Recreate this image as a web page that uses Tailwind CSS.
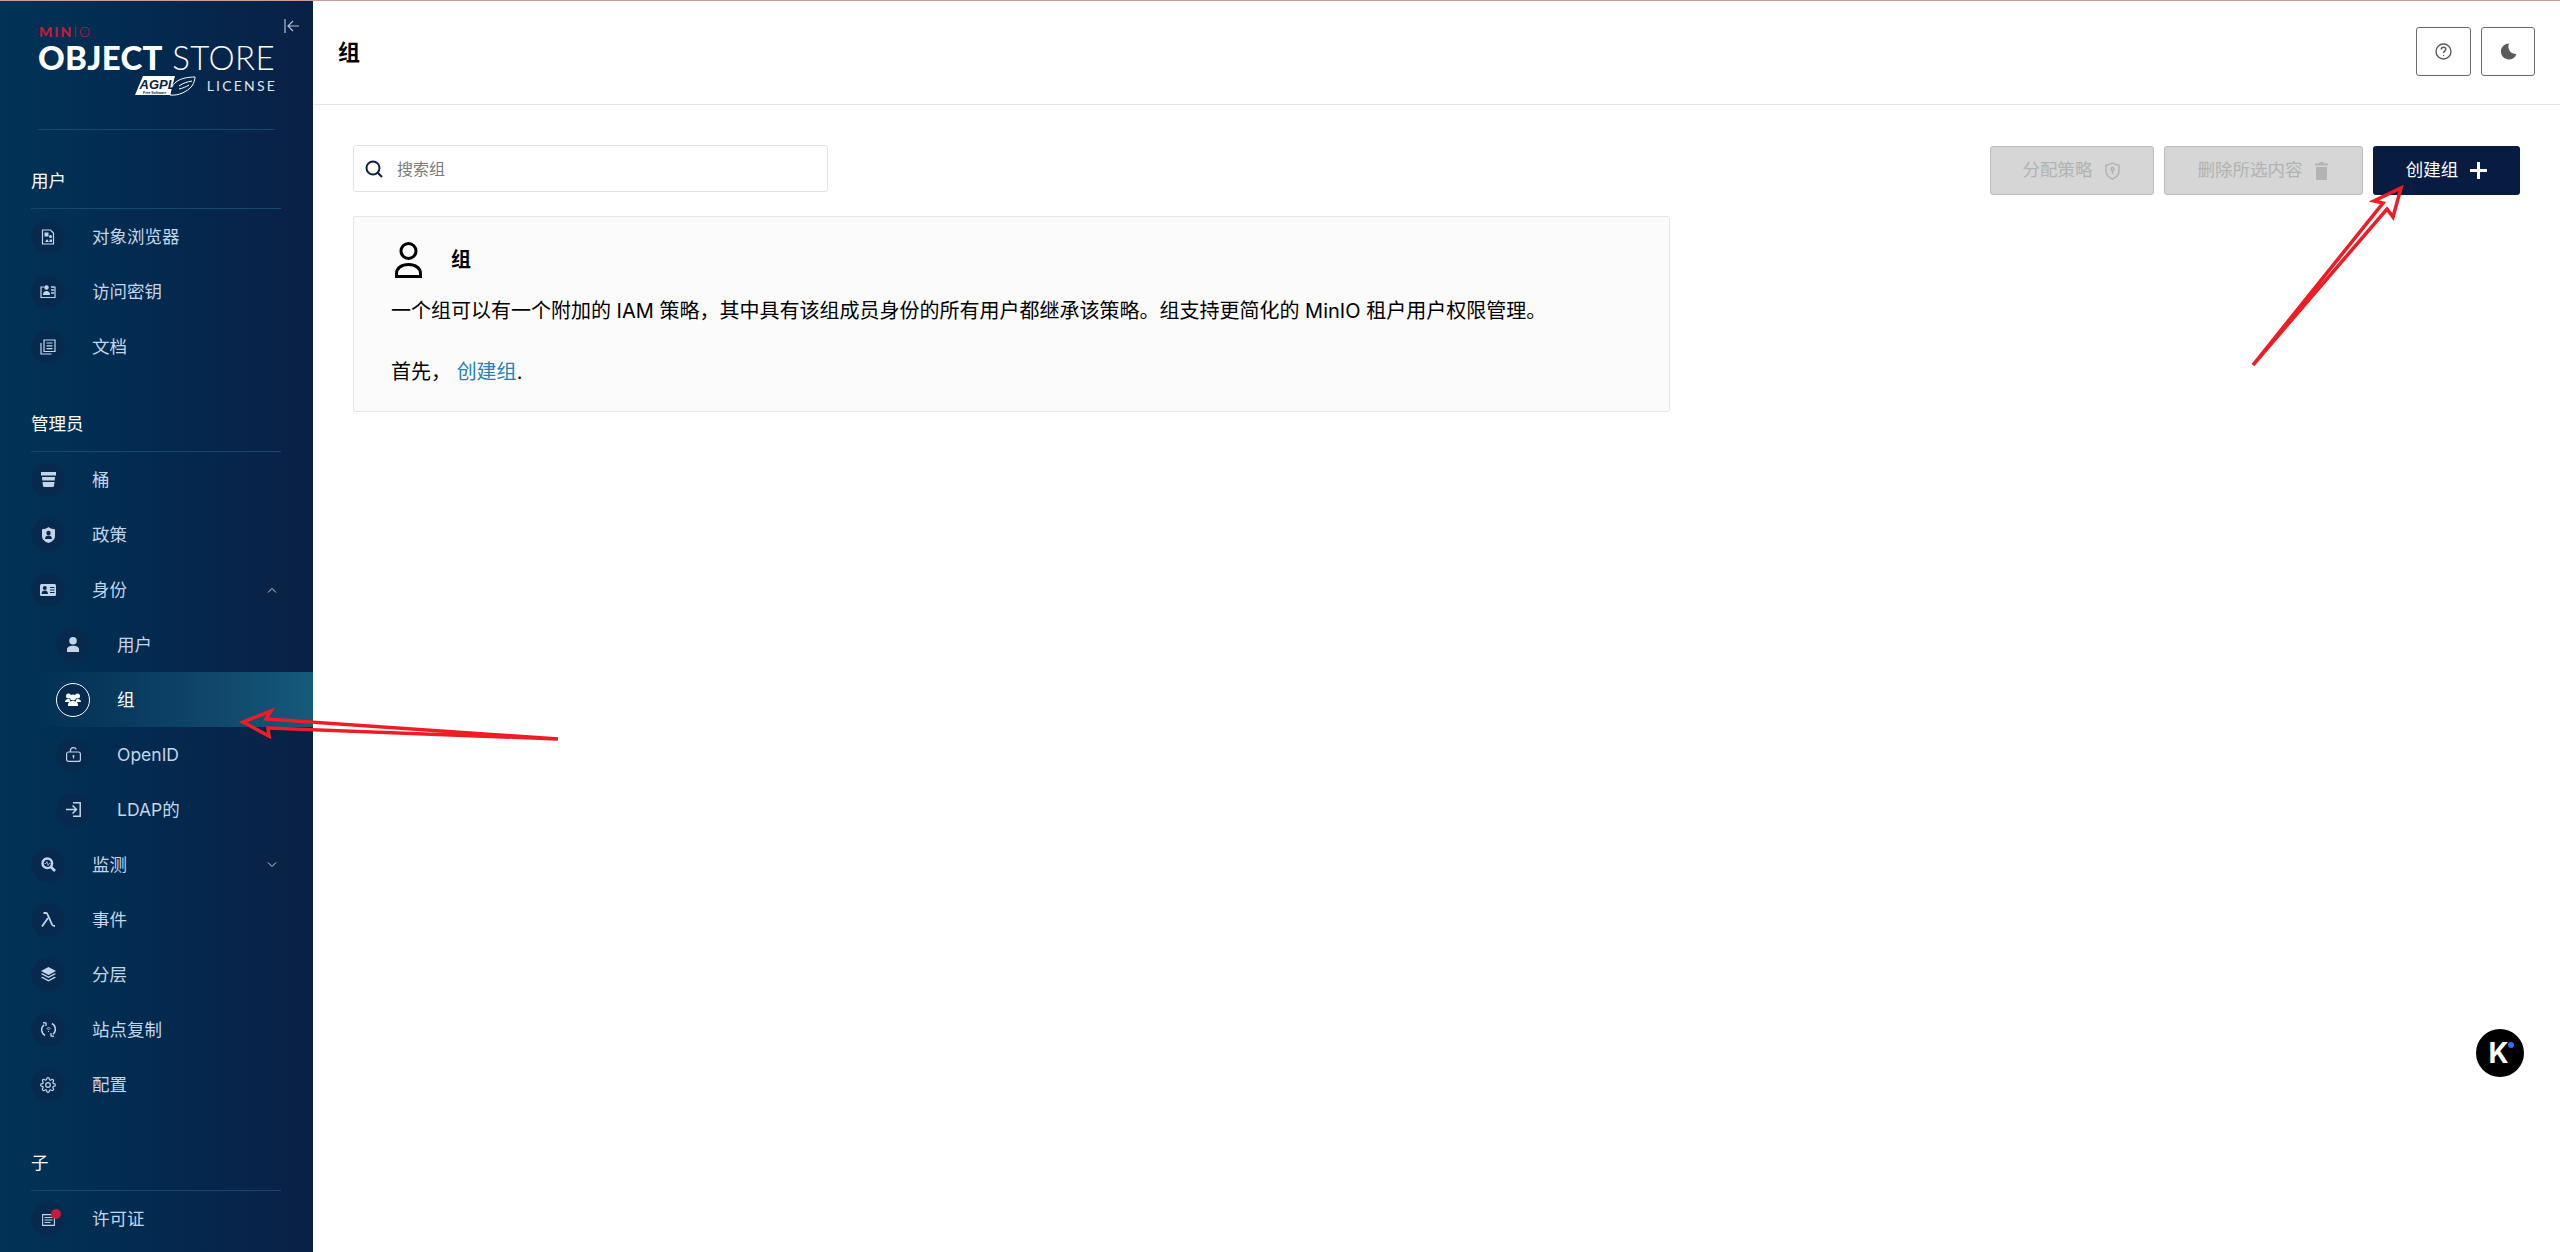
<!DOCTYPE html>
<html lang="zh-CN">
  <head>
    <meta charset="UTF-8" />
    <title>MinIO Object Store</title>
    <script src="https://cdn.jsdelivr.net/npm/@tailwindcss/browser@4"></script>
  </head>
  <body class="relative h-[1252px] w-[2560px] overflow-hidden bg-white font-['Inter','Noto_Sans_CJK_SC',sans-serif] text-black">
    <div class="h-px bg-[#c79e9a]"></div>
    <div class="flex h-[1251px]">
      <!-- Sidebar -->
      <aside class="relative flex w-[313px] shrink-0 flex-col bg-gradient-to-r from-[#013356] via-[#03294f] to-[#0a2045] text-[17.5px] text-[#c5d5e8]">
        <button class="absolute left-[284px] top-[18px] text-[#b4c0d0]">
          <svg class="h-[14px] w-[15px]" viewBox="0 0 15 14" fill="none" stroke="currentColor" stroke-width="1.2">
            <path d="M1 0v14" />
            <path d="M15 7H4M9 2 4 7l5 5" />
          </svg>
        </button>
        <!-- Logo -->
        <div class="mx-[38px] h-[129px] w-[237px] shrink-0 border-b border-[#14486c] pt-[24px] font-['Lato',sans-serif] leading-none">
          <div class="ml-px h-[13px] text-[14px] leading-[13px] tracking-[2px] text-[#c8193e]"><span class="font-black">MIN</span><span class="font-light">IO</span></div>
          <div class="mt-[6px] flex h-[26px] items-center justify-between whitespace-nowrap text-[33px] text-white">
            <span class="font-black tracking-[0.3px]">OBJECT</span><span class="font-light tracking-[0.4px]">STORE</span>
          </div>
          <div class="mt-[5px] flex items-center justify-end gap-[11px]">
            <svg class="h-[21px] w-[61px]" viewBox="0 0 61 21">
              <path d="M8 1h32l-5 19H0z" fill="#fff" />
              <path d="M35 20c8 1 17-3 22-9 2-3 3-7 3-9-6 0-14 1-19 5-4 3-6 8-6 13z" fill="none" stroke="#fff" stroke-width="1" />
              <path d="M44 11c4-3 8-4 13-5M44 14c4-1 7-2 10-4" fill="none" stroke="#fff" stroke-width="1" />
              <text x="4.5" y="14" font-family="Liberation Sans" font-size="13" font-style="italic" font-weight="700" fill="#0a2146">AGPL</text>
              <text x="8" y="19" font-family="Liberation Sans" font-size="3.5" font-weight="700" fill="#0a2146">Free Software</text>
            </svg>
            <span class="text-[14px] leading-[14px] tracking-[2.2px] text-[#dfe6ee] -mr-[2px]">LICENSE</span>
          </div>
        </div>

        <!-- 用户 -->
        <div class="ml-[31px] flex h-[79px] w-[250px] shrink-0 items-end border-b border-[#14486c] pb-[15px] leading-6 text-white">用户</div>
        <div class="flex h-[55px] shrink-0 items-center pl-[31px]">
          <span class="flex h-[34px] w-[34px] items-center justify-center rounded-full border border-[#0b2a50] bg-[#07294e]">
            <svg class="h-[16px] w-[16px]" viewBox="0 0 16 16" fill="none" stroke="currentColor"><path d="M2.5 1h8l3 3v11h-11z" stroke-width="1.2" /><rect x="4.5" y="3.5" width="4" height="4" fill="currentColor" stroke="none" /><circle cx="10.5" cy="7.5" r="1.5" fill="currentColor" stroke="none" /><path d="m5 13 2-3 2 3zM9.5 10.5h2.5v2.500h-2.500z" fill="currentColor" stroke="none" /></svg>
          </span>
          <span class="ml-[27px] pt-[2px]">对象浏览器</span>
        </div>
        <div class="flex h-[55px] shrink-0 items-center pl-[31px]">
          <span class="flex h-[34px] w-[34px] items-center justify-center rounded-full border border-[#0b2a50] bg-[#07294e]">
            <svg class="h-[15px] w-[16px]" viewBox="0 0 16 15" fill="none" stroke="currentColor"><path d="M4 3H1v10.500h14V3h-1" stroke-width="1.2" /><circle cx="6.500" cy="3.500" r="2.200" fill="currentColor" stroke="none" /><path d="M3 11c0-3 1.500-4 3.500-4s3.500 1 3.500 4z" fill="currentColor" stroke="none" /><path d="M11 3h3M11 6h3M11 9h3" stroke-width="1.400" /></svg>
          </span>
          <span class="ml-[27px] pt-[2px]">访问密钥</span>
        </div>
        <div class="flex h-[55px] shrink-0 items-center pl-[31px]">
          <span class="flex h-[34px] w-[34px] items-center justify-center rounded-full border border-[#0b2a50] bg-[#07294e]">
            <svg class="h-[16px] w-[16px]" viewBox="0 0 16 16" fill="none" stroke="currentColor" stroke-width="1.200"><path d="M4 1h11v11.500H4z" /><path d="M1 4v11h10.500" /><path d="M6.500 4h6M6.500 6.800h6M6.500 9.600h6" /></svg>
          </span>
          <span class="ml-[27px] pt-[2px]">文档</span>
        </div>

        <!-- 管理员 -->
        <div class="ml-[31px] flex h-[78px] w-[250px] shrink-0 items-end border-b border-[#14486c] pb-[15px] leading-6 text-white">管理员</div>
        <div class="flex h-[55px] shrink-0 items-center pl-[31px]">
          <span class="flex h-[34px] w-[34px] items-center justify-center rounded-full border border-[#0b2a50] bg-[#07294e]">
            <svg class="h-[15px] w-[15px]" viewBox="0 0 15 15" fill="currentColor"><path d="M0 0h15v3.500H0zM1 5h13l-.300 3.500H1.300zM1.500 10h12l-.500 3.800c0 .700-.500 1.200-1.200 1.200H3.200c-.700 0-1.200-.500-1.200-1.200z" /></svg>
          </span>
          <span class="ml-[27px] pt-[2px]">桶</span>
        </div>
        <div class="flex h-[55px] shrink-0 items-center pl-[31px]">
          <span class="flex h-[34px] w-[34px] items-center justify-center rounded-full border border-[#0b2a50] bg-[#07294e]">
            <svg class="h-[16px] w-[13px]" viewBox="0 0 13 16"><path d="M6.500 0c1 1.200 3.500 2 6.500 2.200V9c0 3.500-3 5.800-6.500 7C3 14.800 0 12.500 0 9V2.200C3 2 5.500 1.200 6.500 0z" fill="currentColor" /><circle cx="6.500" cy="6" r="2.200" fill="#07294e" /><path d="M3 12c0-2.500 1.500-3.500 3.500-3.500S10 9.500 10 12z" fill="#07294e" /></svg>
          </span>
          <span class="ml-[27px] pt-[2px]">政策</span>
        </div>
        <div class="flex h-[55px] shrink-0 items-center pl-[31px] pr-[32px]">
          <span class="flex h-[34px] w-[34px] items-center justify-center rounded-full border border-[#0b2a50] bg-[#07294e]">
            <svg class="h-[12px] w-[16px]" viewBox="0 0 16 12"><rect width="16" height="12" rx="1.500" fill="currentColor" /><circle cx="4.800" cy="4" r="2" fill="#07294e" /><path d="M1.500 10c0-2.500 1.500-3.500 3.300-3.500S8 7.500 8 10z" fill="#07294e" /><path d="M10 3.500h4.500M10 6h4.500M10 8.500h4.500" stroke="#07294e" stroke-width="1.100" /></svg>
          </span>
          <span class="ml-[27px] pt-[2px]">身份</span>
          <span class="ml-auto flex h-[19px] w-[18px] items-center justify-center rounded-sm bg-[#0a2345]">
            <svg class="h-[6px] w-[10px]" viewBox="0 0 10 6" fill="none" stroke="currentColor" stroke-width="1"><path d="m1 5.500 4-4 4 4" /></svg>
          </span>
        </div>
        <div class="flex h-[55px] shrink-0 items-center pl-[56px]">
          <span class="flex h-[34px] w-[34px] items-center justify-center rounded-full border border-[#0b2a50] bg-[#07294e]">
            <svg class="h-[15px] w-[12px]" viewBox="0 0 12 15" fill="currentColor"><circle cx="6" cy="3.800" r="3.800" /><path d="M0 15v-2.500C0 10 2.500 8.800 6 8.800s6 1.200 6 3.700V15z" /></svg>
          </span>
          <span class="ml-[27px] pt-[2px]">用户</span>
        </div>
        <div class="flex h-[55px] shrink-0 items-center bg-gradient-to-r from-transparent from-[10%] to-[#155a7c] pl-[56px] text-white">
          <span class="flex h-[34px] w-[34px] items-center justify-center rounded-full border border-white bg-[#07294e]">
            <svg class="h-[13px] w-[16px]" viewBox="0 0 16 13" fill="currentColor"><circle cx="3.500" cy="3" r="2.500" /><circle cx="12.500" cy="3" r="2.500" /><path d="M0 9c0-2 1.500-3 3.500-3l1.500.500V9zM16 9c0-2-1.500-3-3.500-3L11 6.500V9z" /><circle cx="8" cy="4.500" r="3" /><path d="M3 13v-1.500C3 9.500 5 8 8 8s5 1.500 5 3.500V13z" /></svg>
          </span>
          <span class="ml-[27px] pt-[2px]">组</span>
        </div>
        <div class="flex h-[55px] shrink-0 items-center pl-[56px]">
          <span class="flex h-[34px] w-[34px] items-center justify-center rounded-full border border-[#0b2a50] bg-[#07294e]">
            <svg class="h-[15px] w-[15px]" viewBox="0 0 15 15" fill="none" stroke="currentColor" stroke-width="1.200"><rect x=".6" y="5" width="13.800" height="9.400" rx="2" /><path d="M4.500 5V3.500C4.500 1.500 6 .6 7.500.6c1.200 0 2.300.6 2.800 1.800" /><circle cx="7.500" cy="9" r="1" fill="currentColor" stroke="none" /><path d="M7.500 9v2.500" /></svg>
          </span>
          <span class="ml-[27px] pt-[2px]">OpenID</span>
        </div>
        <div class="flex h-[55px] shrink-0 items-center pl-[56px]">
          <span class="flex h-[34px] w-[34px] items-center justify-center rounded-full border border-[#0b2a50] bg-[#07294e]">
            <svg class="h-[15px] w-[15px]" viewBox="0 0 15 15" fill="none" stroke="currentColor" stroke-width="1.500"><path d="M7 .8h7.200v13.400H7" /><path d="M0 7.500h10M6.500 3.500l4 4-4 4" /></svg>
          </span>
          <span class="ml-[27px] pt-[2px]">LDAP的</span>
        </div>
        <div class="flex h-[55px] shrink-0 items-center pl-[31px] pr-[32px]">
          <span class="flex h-[34px] w-[34px] items-center justify-center rounded-full border border-[#0b2a50] bg-[#07294e]">
            <svg class="h-[15px] w-[15px]" viewBox="0 0 15 15" fill="none" stroke="currentColor"><circle cx="6.300" cy="6.300" r="4.800" stroke-width="2.400" /><path d="m10 10 4 4" stroke-width="2.600" /><path d="M3.500 6.500h1.500l1-2 1 4 1-2h1.500" stroke-width=".7" /></svg>
          </span>
          <span class="ml-[27px] pt-[2px]">监测</span>
          <span class="ml-auto flex h-[19px] w-[18px] items-center justify-center rounded-sm bg-[#0a2345]">
            <svg class="h-[6px] w-[10px]" viewBox="0 0 10 6" fill="none" stroke="currentColor" stroke-width="1"><path d="m1 .5 4 4 4-4" /></svg>
          </span>
        </div>
        <div class="flex h-[55px] shrink-0 items-center pl-[31px]">
          <span class="flex h-[34px] w-[34px] items-center justify-center rounded-full border border-[#0b2a50] bg-[#07294e]">
            <svg class="h-[15px] w-[15px]" viewBox="0 0 15 15" fill="none" stroke="currentColor" stroke-width="1.800"><path d="M2.500 1h2.300c1 0 1.500.500 2 1.800L11 12.500c.400 1 1 1.500 3 1.500" /><path d="M7 6 1 14.500" /></svg>
          </span>
          <span class="ml-[27px] pt-[2px]">事件</span>
        </div>
        <div class="flex h-[55px] shrink-0 items-center pl-[31px]">
          <span class="flex h-[34px] w-[34px] items-center justify-center rounded-full border border-[#0b2a50] bg-[#07294e]">
            <svg class="h-[15px] w-[15px]" viewBox="0 0 15 15" fill="currentColor"><path d="m7.500 0 7.500 4-7.500 4L0 4z" /><path d="m0 7 1.500-.8 6 3.200 6-3.200L15 7l-7.500 4zM0 10.500l1.500-.8 6 3.200 6-3.200 1.500.8-7.500 4z" /></svg>
          </span>
          <span class="ml-[27px] pt-[2px]">分层</span>
        </div>
        <div class="flex h-[55px] shrink-0 items-center pl-[31px]">
          <span class="flex h-[34px] w-[34px] items-center justify-center rounded-full border border-[#0b2a50] bg-[#07294e]">
            <svg class="h-[15px] w-[15px]" viewBox="0 0 15 15" fill="none" stroke="currentColor" stroke-width="1.500"><path d="M4 13.500A6.500 6.500 0 0 1 3 2.800M11 1.500a6.500 6.500 0 0 1 1 10.700" /><path d="M2 .5l3 .5v3M13 14.500l-3-.5v-3" stroke-width="1.300" /><path d="M6 6.500l1.500-1.500L9 6.500 7.500 8zM7 10l1-1" stroke-width=".9" /></svg>
          </span>
          <span class="ml-[27px] pt-[2px]">站点复制</span>
        </div>
        <div class="flex h-[55px] shrink-0 items-center pl-[31px]">
          <span class="flex h-[34px] w-[34px] items-center justify-center rounded-full border border-[#0b2a50] bg-[#07294e]">
            <svg class="h-[16px] w-[16px]" viewBox="0 0 24 24" fill="none" stroke="currentColor" stroke-width="1.800"><circle cx="12" cy="12" r="3.500" /><path d="M19.400 15a1.700 1.700 0 0 0 .3 1.800l.1.100a2 2 0 1 1-2.900 2.900l-.1-.1a1.700 1.700 0 0 0-2.800 1.200V21a2 2 0 1 1-4 0v-.1a1.700 1.700 0 0 0-2.900-1.200l-.1.100a2 2 0 1 1-2.800-2.900l.1-.1a1.700 1.700 0 0 0-1.200-2.800H3a2 2 0 1 1 0-4h.1a1.700 1.700 0 0 0 1.200-2.900l-.1-.1a2 2 0 1 1 2.900-2.800l.1.100a1.700 1.700 0 0 0 2.800-1.200V3a2 2 0 1 1 4 0v.1a1.700 1.700 0 0 0 2.900 1.200l.1-.1a2 2 0 1 1 2.800 2.900l-.1.1a1.700 1.700 0 0 0 1.200 2.800h.1a2 2 0 1 1 0 4h-.1a1.700 1.700 0 0 0-1.500 1z" /></svg>
          </span>
          <span class="ml-[27px] pt-[2px]">配置</span>
        </div>

        <!-- 子 -->
        <div class="ml-[31px] flex h-[79px] w-[250px] shrink-0 items-end border-b border-[#14486c] pb-[15px] leading-6 text-white">子</div>
        <div class="flex h-[55px] shrink-0 items-center pl-[31px]">
          <span class="relative flex h-[34px] w-[34px] items-center justify-center rounded-full border border-[#0b2a50] bg-[#07294e]">
            <svg class="mt-[3px] h-[12px] w-[13px]" viewBox="0 0 13 12" fill="none" stroke="currentColor" stroke-width="1.100"><path d="M.6.600h11.800v10.800H.6z" /><path d="M2.500 3.500h8M2.500 6h8M2.500 8.500h6" /></svg>
            <span class="absolute left-[19px] top-[6px] h-[10px] w-[10px] rounded-full bg-[#c8193e]"></span>
          </span>
          <span class="ml-[27px] pt-[2px]">许可证</span>
        </div>
      </aside>

      <!-- Main -->
      <main class="min-w-0 flex-1">
        <header class="flex h-[104px] items-center justify-between border-b border-[#e5e5e5] pl-[25px] pr-[25px]">
          <h1 class="text-[22px] font-bold">组</h1>
          <div class="flex gap-[10px] pb-[3px]">
            <button class="flex h-[49px] w-[55px] items-center justify-center rounded-[3px] border border-[#6a6a6a] text-[#5b5b5b]">
              <svg class="h-[17px] w-[17px]" viewBox="0 0 17 17" fill="none" stroke="currentColor" stroke-width="1.400"><circle cx="8.500" cy="8.500" r="7.500" /><path d="M6.200 6.500c0-1.500 1-2.300 2.300-2.300s2.300.8 2.300 2.100c0 1.800-2.300 1.900-2.300 3.800" /><circle cx="8.500" cy="12.500" r=".7" fill="currentColor" stroke="none" /></svg>
            </button>
            <button class="flex h-[49px] w-[54px] items-center justify-center rounded-[3px] border border-[#6a6a6a] text-[#5b5b5b]">
              <svg class="h-[17px] w-[17px]" viewBox="0 0 17 17" fill="currentColor"><path d="M9 .5a8 8 0 1 0 7.500 10.500A7.500 7.500 0 0 1 9 .5z" /></svg>
            </button>
          </div>
        </header>
        <div class="px-[40px] pt-[40px]">
          <div class="flex h-[50px] items-start justify-between">
            <label class="flex h-[47px] w-[475px] items-center rounded-[3px] border border-[#e2e2e2] bg-white pl-[11px]">
              <svg class="h-[18px] w-[18px] text-[#0a1f44]" viewBox="0 0 18 18" fill="none" stroke="currentColor" stroke-width="2"><circle cx="8" cy="8" r="6.500" /><path d="m12.500 12.500 4.500 4.500" /></svg>
              <span class="ml-[14px] text-[16px] text-[#7b7b7b]">搜索组</span>
            </label>
            <div class="mt-px flex gap-[10px]">
              <button class="flex h-[49px] w-[164px] items-center justify-center gap-[12px] rounded-[3px] border border-[#bbbcbb] bg-[#d5d6d5] pr-[2px] text-[17.500px] text-[#b2b3b2]">
                分配策略
                <svg class="h-[18px] w-[15px]" viewBox="0 0 15 18" fill="none" stroke="currentColor" stroke-width="1.500"><path d="M7.500 1C9 2.200 11.500 3 14 3.200V9c0 3.800-3 6.500-6.500 8C4 15.500 1 12.800 1 9V3.200C3.500 3 6 2.200 7.500 1z" /><circle cx="7.500" cy="7" r="1.500" /><path d="M7.500 8.500v3.500" /></svg>
              </button>
              <button class="flex h-[49px] w-[199px] items-center justify-center gap-[12px] rounded-[3px] border border-[#bbbcbb] bg-[#d5d6d5] pr-[2px] text-[17.500px] text-[#b2b3b2]">
                删除所选内容
                <svg class="h-[18px] w-[13px]" viewBox="0 0 13 18" fill="currentColor"><path d="M4.500 0h4l.5 1.500h4V3.500H0V1.500h4zM1 5h11v11.500c0 .8-.7 1.500-1.500 1.500h-8C1.700 18 1 17.300 1 16.500z" /></svg>
              </button>
              <button class="flex h-[49px] w-[147px] items-center justify-center gap-[12px] rounded-[3px] bg-[#081c42] text-[17.500px] text-white">
                创建组
                <svg class="h-[17px] w-[17px]" viewBox="0 0 17 17" fill="currentColor"><path d="M7 0h3v7h7v3h-7v7H7v-7H0V7h7z" /></svg>
              </button>
            </div>
          </div>
          <section class="mt-[21px] h-[196px] w-[1317px] rounded-[2px] border border-[#e5e5e5] bg-[#fbfbfb] pl-[37px] pt-[25px]">
            <div class="flex h-[36px] items-center">
              <svg class="ml-[4px] h-[36px] w-[27px]" viewBox="0 0 27 36" fill="none" stroke="currentColor" stroke-width="3"><circle cx="13.500" cy="9" r="7.500" /><path d="M1.500 34.500v-3C1.500 26 6.500 22.500 13.500 22.500s12 3.500 12 9v3z" /></svg>
              <h2 class="ml-[29px] text-[20px] font-bold">组</h2>
            </div>
            <p class="mt-[18px] text-[20px] leading-[30px]">一个组可以有一个附加的 IAM 策略，其中具有该组成员身份的所有用户都继承该策略。组支持更简化的 MinIO 租户用户权限管理。</p>
            <p class="mt-[31px] text-[20px] leading-[30px]">首先， <a class="text-[#2781b0]">创建组</a>.</p>
          </section>
        </div>
      </main>
    </div>

    <!-- Annotation arrows and floating badge -->
    <svg class="pointer-events-none absolute left-0 top-0 h-[1252px] w-[2560px]" viewBox="0 0 2560 1252" fill="none" stroke="#ee1c25" stroke-width="3.500" stroke-linejoin="miter">
      <path d="M558 739 266 719l5-8-28 11 26 14-1-8z" />
      <path d="M2253 365 2387 209l6 8 8-29-27 13 9 2z" />
    </svg>
    <div class="absolute left-[2476px] top-[1029px] flex h-[48px] w-[48px] items-center justify-center rounded-full bg-black">
      <span class="-ml-[3px] text-[28px] font-bold leading-none text-white">K</span>
      <span class="absolute left-[32px] top-[13px] h-[6px] w-[6px] rounded-full bg-[#2f6bff]"></span>
    </div>
  </body>
</html>
